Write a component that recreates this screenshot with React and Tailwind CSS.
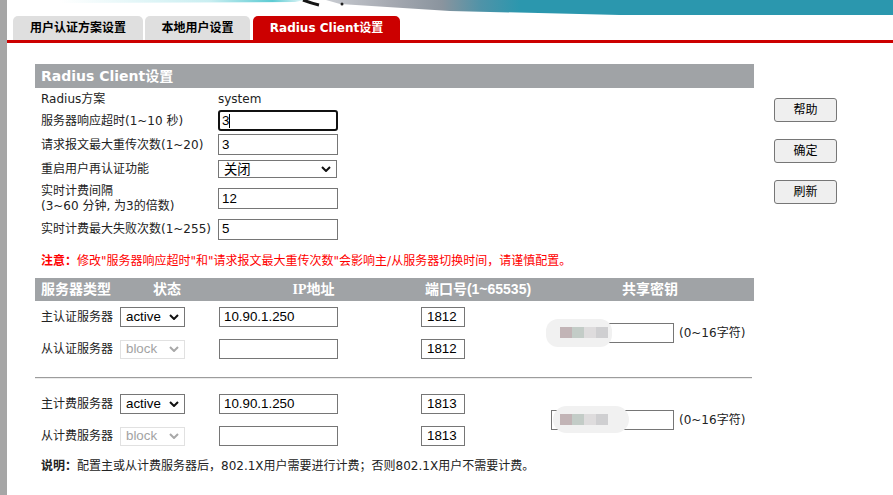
import React from "react";

function Chevron({ color = "#111" }) {
  return (
    <svg width="10" height="6" viewBox="0 0 10 6" className="shrink-0">
      <path d="M1 1 L5 5 L9 1" fill="none" stroke={color} strokeWidth="2" />
    </svg>
  );
}

function FakeSelect({ text, disabled, className }) {
  return (
    <div
      className={
        "flex items-center justify-between pl-[5px] pr-[5px] text-[13.333px] font-['Liberation_Sans','Noto_Sans_CJK_SC',sans-serif] bg-white border " +
        (disabled ? "border-[#e1e1e1] text-[#a3a3a3] " : "border-[#767676] text-black ") +
        className
      }
    >
      <span>{text}</span>
      <Chevron color={disabled ? "#a8a8a8" : "#111"} />
    </div>
  );
}

function Field({ value, className }) {
  return (
    <div
      className={
        "flex items-center bg-white border border-[#767676] text-[13.333px] text-black font-['Liberation_Sans',sans-serif] " +
        className
      }
    >
      {value}
    </div>
  );
}

function Blur({ className, inner }) {
  return (
    <div className={"absolute bg-[#f1f1f1] " + className}>
      <div className={"absolute top-[8px] flex " + inner}>
        <div className="w-[12px] h-[11px] bg-[#c2b4b6]" />
        <div className="w-[12px] h-[11px] bg-[#c3ccc7]" />
        <div className="w-[12px] h-[11px] bg-[#dedcdd]" />
        <div className="w-[12px] h-[11px] bg-[#cfcfd1]" />
      </div>
    </div>
  );
}

function ServerRow({ label, status, disabled, ip, port }) {
  return (
    <div className="flex items-center h-[32px]">
      <div className="w-[85px] pl-[6px] whitespace-nowrap">{label}</div>
      <FakeSelect text={status} disabled={disabled} className={disabled ? "w-[65px] h-[19px]" : "w-[65px] h-[20px]"} />
      <Field value={ip} className="ml-[34px] w-[119px] h-[20px] pl-[4px]" />
      <Field value={port} className="ml-[83px] w-[44px] h-[20px] pl-[5px]" />
    </div>
  );
}

function ServerBlock({ rows, blob, inner }) {
  return (
    <div className="flex items-center">
      <div className="flex flex-col">
        {rows.map((r) => (
          <ServerRow key={r.label} {...r} />
        ))}
      </div>
      <div className="ml-[86px] flex items-center">
        <div className="relative w-[123px] h-[20px] border border-[#767676] bg-white">
          <Blur className={blob} inner={inner} />
        </div>
        <span className="ml-[5px] whitespace-nowrap">(0~16字符)</span>
      </div>
    </div>
  );
}

function Banner() {
  return (
    <svg width="886" height="16" viewBox="7 0 886 16" className="block">
      <defs>
        <linearGradient id="strip" x1="60" y1="0" x2="310" y2="0" gradientUnits="userSpaceOnUse">
          <stop offset="0" stopColor="#ffffff" />
          <stop offset="0.6" stopColor="#c9eef1" />
          <stop offset="0.85" stopColor="#5ccbd3" />
          <stop offset="1" stopColor="#ffffff" />
        </linearGradient>
        <linearGradient id="photo" x1="325" y1="0" x2="520" y2="0" gradientUnits="userSpaceOnUse">
          <stop offset="0" stopColor="#c9ccd2" />
          <stop offset="0.35" stopColor="#a4a8b0" />
          <stop offset="0.6" stopColor="#8a949e" />
          <stop offset="0.8" stopColor="#4f93a8" />
          <stop offset="1" stopColor="#2b97ae" />
        </linearGradient>
      </defs>
      <polygon points="60,0 305,0 295,2 60,3" fill="url(#strip)" />
      <polygon points="326,0 893,0 893,15 620,15 450,11 340,4" fill="url(#photo)" />
      <path d="M303 0 Q311 3 319 5" fill="none" stroke="#151515" strokeWidth="3" />
      <circle cx="342" cy="4" r="1.5" fill="#222" />
    </svg>
  );
}

export default function App() {
  return (
    <div className="flex min-h-[495px] bg-white text-[12px] text-[#222] font-['DejaVu_Sans','Noto_Sans_CJK_SC',sans-serif]">
      <div className="w-[7px] shrink-0 bg-[#a6a6a6]" />
      <div className="flex-1 flex flex-col">
        <Banner />
        <div className="flex items-end h-[24px] pl-[6px] font-bold">
          <div className="w-[130px] h-[24px] rounded-t-[5px] bg-[#dfdfdf] flex items-center justify-center text-black">
            用户认证方案设置
          </div>
          <div className="ml-[2px] w-[105px] h-[24px] rounded-t-[5px] bg-[#dfdfdf] flex items-center justify-center text-black">
            本地用户设置
          </div>
          <div className="ml-[3px] w-[147px] h-[24px] rounded-t-[5px] bg-[#cc0000] flex items-center justify-center text-white">
            Radius Client设置
          </div>
        </div>
        <div className="h-[3px] bg-[#cc0000]" />

        <div className="flex pl-[28px] pt-[21px]">
          <div className="w-[719px] flex flex-col">
            <div className="h-[24px] bg-[#a0a3a6] text-white font-bold text-[14px] pl-[6px] flex items-center">
              Radius Client设置
            </div>

            <div className="flex items-center h-[21px]">
              <div className="w-[183px] pl-[6px]">Radius方案</div>
              <div>system</div>
            </div>
            <div className="flex items-center h-[23px]">
              <div className="w-[183px] pl-[6px]">服务器响应超时(1~10 秒)</div>
              <div className="flex items-center w-[120px] h-[21px] border-2 border-[#111] rounded-[3px] pl-[2px] text-[13.333px] text-black font-['Liberation_Sans',sans-serif]">
                3<span className="w-[1px] h-[14px] bg-black" />
              </div>
            </div>
            <div className="flex items-center h-[25px]">
              <div className="w-[183px] pl-[6px]">请求报文最大重传次数(1~20)</div>
              <Field value="3" className="w-[120px] h-[21px] pl-[3px]" />
            </div>
            <div className="flex items-center h-[24px]">
              <div className="w-[183px] pl-[6px]">重启用户再认证功能</div>
              <FakeSelect text="关闭" className="w-[119px] h-[18px] pr-[4px] font-['Noto_Sans_CJK_SC',sans-serif]" />
            </div>
            <div className="flex items-center h-[35px]">
              <div className="w-[183px] pl-[6px] leading-[15px]">
                实时计费间隔
                <br />
                (3~60 分钟, 为3的倍数)
              </div>
              <Field value="12" className="w-[120px] h-[21px] pl-[3px]" />
            </div>
            <div className="flex items-center h-[26px]">
              <div className="w-[183px] pl-[6px]">实时计费最大失败次数(1~255)</div>
              <Field value="5" className="w-[120px] h-[21px] pl-[3px]" />
            </div>

            <div className="mt-[11px] h-[16px] leading-[16px] pl-[6px] text-[#ff0000] whitespace-nowrap">
              <span className="font-bold">注意：</span>
              修改"服务器响应超时"和"请求报文最大重传次数"会影响主/从服务器切换时间，请谨慎配置。
            </div>

            <div className="mt-[9px] h-[23px] bg-[#a0a3a6] text-white font-bold text-[14px] font-['Liberation_Sans','Noto_Sans_CJK_SC',sans-serif] grid grid-cols-[82px_100px_193px_136px_1fr] items-center">
              <div className="pl-[6px] whitespace-nowrap">服务器类型</div>
              <div className="text-center">状态</div>
              <div className="text-center">
                <span className="font-['Liberation_Serif',serif]">IP</span>地址
              </div>
              <div className="text-center whitespace-nowrap">端口号(1~65535)</div>
              <div className="text-center">共享密钥</div>
            </div>

            <ServerBlock
              blob="left-[-6px] top-[-5px] w-[66px] h-[28px] rounded-[12px]"
              inner="left-[14px]"
              rows={[
                { label: "主认证服务器", status: "active", ip: "10.90.1.250", port: "1812" },
                { label: "从认证服务器", status: "block", disabled: true, ip: "", port: "1812" },
              ]}
            />

            <div className="mt-[12px] h-[2px] border-t border-[#9c9c9c] border-b border-b-[#ececec] mr-[2px]" />

            <div className="mt-[9px]">
              <ServerBlock
                blob="left-[1px] top-[-5px] w-[76px] h-[27px] rounded-full"
                inner="left-[7px]"
                rows={[
                  { label: "主计费服务器", status: "active", ip: "10.90.1.250", port: "1813" },
                  { label: "从计费服务器", status: "block", disabled: true, ip: "", port: "1813" },
                ]}
              />
            </div>

            <div className="mt-[6px] h-[16px] leading-[16px] pl-[6px] whitespace-nowrap">
              <span className="font-bold">说明：</span>
              配置主或从计费服务器后，802.1X用户需要进行计费；否则802.1X用户不需要计费。
            </div>
          </div>

          <div className="ml-[20px] pt-[34px] flex flex-col gap-[17px]">
            <button className="w-[63px] h-[24px] bg-[#efefef] border border-[#767676] rounded-[3px] text-black text-[12px]">帮助</button>
            <button className="w-[63px] h-[24px] bg-[#efefef] border border-[#767676] rounded-[3px] text-black text-[12px]">确定</button>
            <button className="w-[63px] h-[24px] bg-[#efefef] border border-[#767676] rounded-[3px] text-black text-[12px]">刷新</button>
          </div>
        </div>
      </div>
    </div>
  );
}
